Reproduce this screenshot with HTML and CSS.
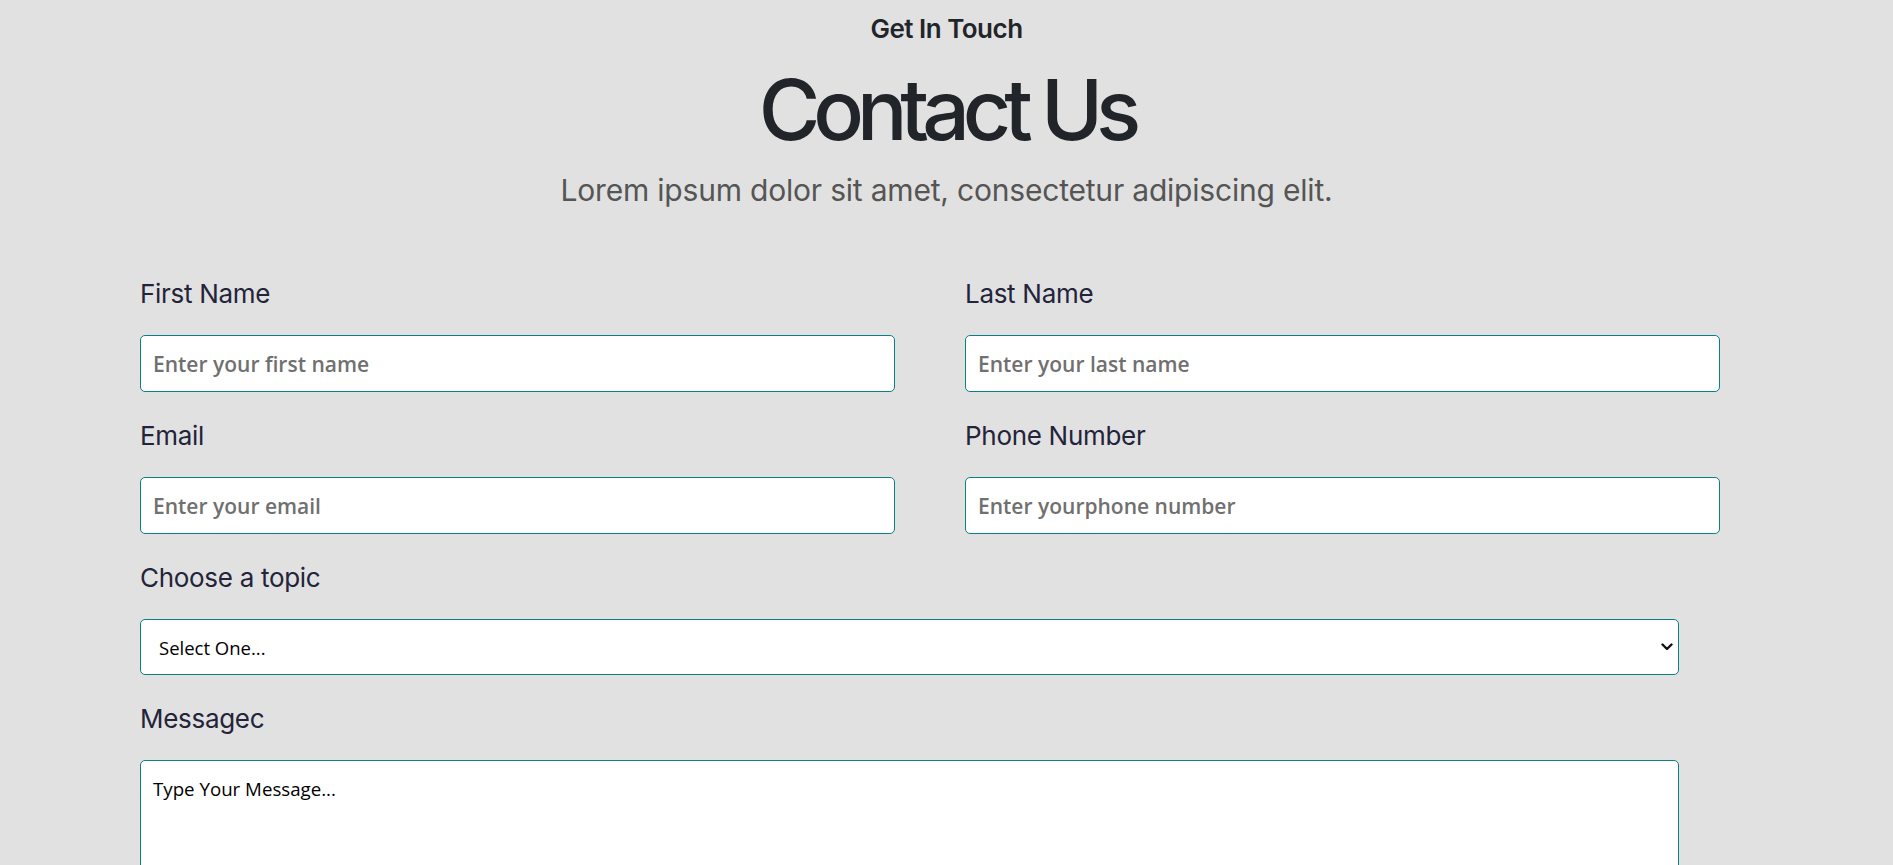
FILE: index.html
```html
<!DOCTYPE html>
<html lang="en">
<head>
<meta charset="utf-8">
<title>Contact Us</title>
<link rel="stylesheet" href="styles.css">
</head>
<body>
<section class="contact">
  <header class="contact-head">
    <p class="eyebrow">Get In Touch</p>
    <h1 class="title">Contact Us</h1>
    <p class="lead">Lorem ipsum dolor sit amet, consectetur adipiscing elit.</p>
  </header>
  <form class="form">
    <div class="row">
      <div class="field">
        <label class="label" for="fn">First Name</label>
        <input class="input" id="fn" type="text" placeholder="Enter your first name">
      </div>
      <div class="field">
        <label class="label" for="ln">Last Name</label>
        <input class="input" id="ln" type="text" placeholder="Enter your last name">
      </div>
    </div>
    <div class="row">
      <div class="field">
        <label class="label" for="em">Email</label>
        <input class="input" id="em" type="email" placeholder="Enter your email">
      </div>
      <div class="field">
        <label class="label" for="ph">Phone Number</label>
        <input class="input" id="ph" type="tel" placeholder="Enter yourphone number">
      </div>
    </div>
    <div class="field wide">
      <label class="label" for="tp">Choose a topic</label>
      <div class="select-wrap">
        <select class="select" id="tp">
          <option>Select One...</option>
        </select>
        <svg class="chev" viewBox="0 0 12 8" width="12" height="8" aria-hidden="true"><path d="M1.5 1.5 6 6l4.5-4.5" fill="none" stroke="#111" stroke-width="2.4" stroke-linecap="round" stroke-linejoin="round"/></svg>
      </div>
    </div>
    <div class="field wide">
      <label class="label" for="msg">Messagec</label>
      <textarea class="textarea" id="msg" placeholder="Type Your Message..."></textarea>
    </div>
  </form>
</section>
</body>
</html>
```

FILE: styles.css
```css
* { box-sizing: border-box; }

html, body {
  margin: 0;
  padding: 0;
  background: #e1e1e1;
}

body {
  font-family: "Inter", "Lato", sans-serif;
  color: #212529;
}

.contact {
  padding: 0 0 40px 140px;
}

.contact-head {
  width: 1613px;
  text-align: center;
  padding-top: 12px;
}

.eyebrow {
  margin: 0;
  font-size: 26px;
  line-height: 34px;
  font-weight: 600;
  letter-spacing: -0.5px;
  color: #212529;
}

.title {
  margin: 16px 0 0;
  font-size: 84px;
  line-height: 96px;
  font-weight: 500;
  letter-spacing: -7.1px;
  color: #212529;
}

.lead {
  margin: 12px 0 0;
  font-size: 30px;
  line-height: 40px;
  font-weight: 400;
  color: #555;
  letter-spacing: -0.2px;
}

.form {
  margin-top: 67px;
  display: flex;
  flex-direction: column;
}

.row {
  display: flex;
  gap: 70px;
  width: 1580px;
}

.row .field { width: 755px; }

.field {
  display: flex;
  flex-direction: column;
  padding-bottom: 27px;
}

.wide { width: 1539px; }

.label {
  font-size: 26px;
  line-height: 34px;
  font-weight: 400;
  color: #23243a;
  letter-spacing: -0.3px;
  margin-bottom: 24px;
}

.input,
.select,
.textarea {
  width: 100%;
  background: #fff;
  border: 1px solid #0b7f86;
  border-radius: 5px;
  outline: none;
}

.input {
  height: 57px;
  padding: 0 12px;
  font-family: "Open Sans", "Noto Sans", sans-serif;
  font-size: 21px;
  font-weight: 600;
  letter-spacing: 0;
  color: #333;
}

.input::placeholder {
  color: #707070;
}

.select-wrap {
  position: relative;
}

.select {
  display: block;
  height: 56px;
  padding: 0 18px;
  appearance: none;
  -webkit-appearance: none;
  font-family: "Open Sans", "Noto Sans", sans-serif;
  font-size: 18.5px;
  color: #000;
}

.chev {
  position: absolute;
  right: 6px;
  top: 24px;
  pointer-events: none;
}

.textarea {
  display: block;
  height: 160px;
  padding: 15px 12px;
  resize: none;
  font-family: "Open Sans", "Noto Sans", sans-serif;
  font-size: 18.7px;
}

.textarea::placeholder {
  color: #000;
}
```
